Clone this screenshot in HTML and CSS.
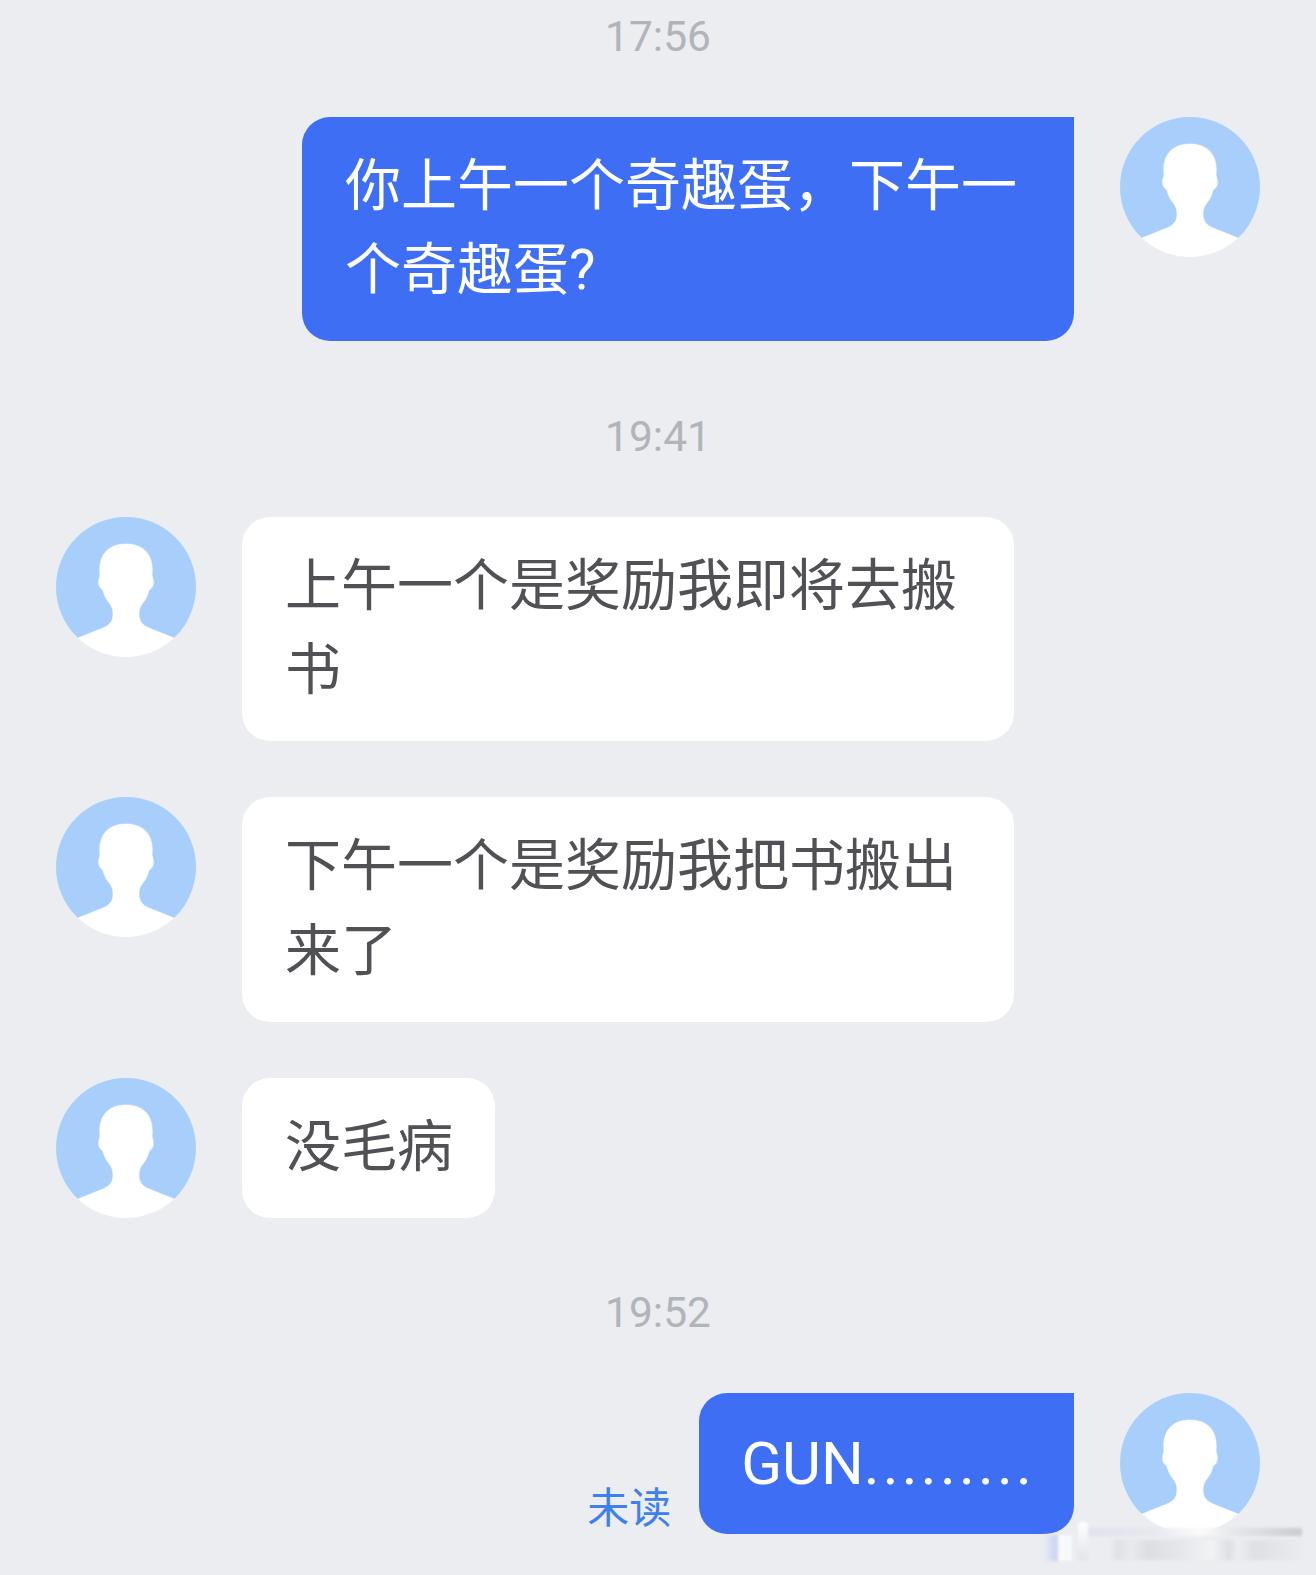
FILE: index.html
```html
<!DOCTYPE html>
<html lang="zh-CN">
<head>
    <meta charset="UTF-8">
    <title>聊天</title>
    <link rel="stylesheet" href="styles.css">
</head>
<body>
    <svg class="defs" width="0" height="0">
        <symbol id="avatar" viewBox="0 0 140 140">
            <circle cx="70" cy="70" r="70" fill="#a8cffb"/>
            <path d="M22 121 L47 111 C54 108 57 104 57 97 C57 90 54 87 51 83 C49 80 48 77 47 73 C43 71 42 67 43 62 L44 58 C42 38 52 27 70 27 C88 27 98 38 96 58 L97 62 C98 67 97 71 93 73 C92 77 91 80 89 83 C86 87 83 90 83 97 C83 104 86 108 93 111 L118 121 A70 70 0 0 1 22 121 Z" fill="#fff" stroke="#fff" stroke-width=".6"/>
        </symbol>
    </svg>

    <div class="time first">17:56</div>
    <div class="row me">
        <div class="bubble blue">你上午一个奇趣蛋，下午一个奇趣蛋?</div>
        <svg class="avatar"><use href="#avatar"/></svg>
    </div>

    <div class="time">19:41</div>
    <div class="row">
        <svg class="avatar"><use href="#avatar"/></svg>
        <div class="bubble">上午一个是奖励我即将去搬书</div>
    </div>
    <div class="row">
        <svg class="avatar"><use href="#avatar"/></svg>
        <div class="bubble">下午一个是奖励我把书搬出来了</div>
    </div>
    <div class="row">
        <svg class="avatar"><use href="#avatar"/></svg>
        <div class="bubble">没毛病</div>
    </div>

    <div class="time">19:52</div>
    <div class="row me">
        <span class="unread">未读</span>
        <div class="bubble blue latin">GUN<span class="dots">.........</span></div>
        <svg class="avatar"><use href="#avatar"/></svg>
    </div>

    <!-- blurred watermark strip along the bottom -->
    <div class="mark">
        <span class="mark-fade"></span>
        <span class="mark-bar"></span>
        <span class="mark-cap"></span>
        <span class="mark-band"></span>
        <span class="mark-low"></span>
    </div>
</body>
</html>
```

FILE: styles.css
```css
html, body {margin: 0; padding: 0}
body {position: relative; height: 1575px; overflow: hidden; background-color: #ebedf1; font-family: Roboto, "Noto Sans CJK SC", sans-serif; color: #505155}
.defs {display: block; height: 0}
.time {font-size: 42.5px; line-height: 48px; color: #b1b4b9; text-align: center; margin: 71.5px 0 56px}
.time.first {margin-top: 13px}
.row {display: flex; align-items: flex-start; gap: 46px; padding: 0 56px; margin-bottom: 56px}
.row.me {justify-content: flex-end; margin-bottom: 0}
.avatar {width: 140px; height: 140px; flex: none}
.bubble {box-sizing: border-box; max-width: 772px; min-height: 140px; padding: 27px 42px 29px 43px; font-size: 56px; line-height: 84.2px; background: #fff; border-radius: 28px; overflow-wrap: anywhere}
.bubble.blue {background: #3d6ef4; color: #fff; border-top-right-radius: 0}
.bubble.latin {font-size: 60px; padding: 29px 39px 27px 42px}
.dots {letter-spacing: 3.2px}
.unread {align-self: flex-end; font-size: 42px; line-height: 56px; color: #3e80ee; margin: 0 -18px -3px 0}
.mark {position: absolute; left: 1043px; top: 1522px; width: 262px; height: 40px; filter: blur(1.5px)}
.mark span {position: absolute; display: block}
.mark-fade {left: 0; top: 13px; width: 16px; height: 26px; background: linear-gradient(90deg, #ebedf1, #c4cff0)}
.mark-bar {left: 15px; top: 13px; width: 14px; height: 26px; background: #f8f9fb}
.mark-cap {left: 35px; top: 0; width: 10px; height: 38px; border-radius: 4px 4px 0 0; background: linear-gradient(#fff, #e2e4e9)}
.mark-band {left: 45px; top: 6px; width: 214px; height: 8px; background: linear-gradient(90deg, #dfe2ea, #e6e8ee 30%, #fbfbfc 52%, #e3e5e9 70%, #c9cbd0)}
.mark-low {left: 45px; top: 18px; width: 214px; height: 20px; background: linear-gradient(90deg, #ebedf1 10%, #dfe1e5 14%, #e8eaed 20%, #dcdee3 28%, #e6e8eb 45%, #f2f3f5 58%, #dddfe3 66%, #ecedf0 70%, #dee0e4 78%, #e9ebee 100%)}
```
